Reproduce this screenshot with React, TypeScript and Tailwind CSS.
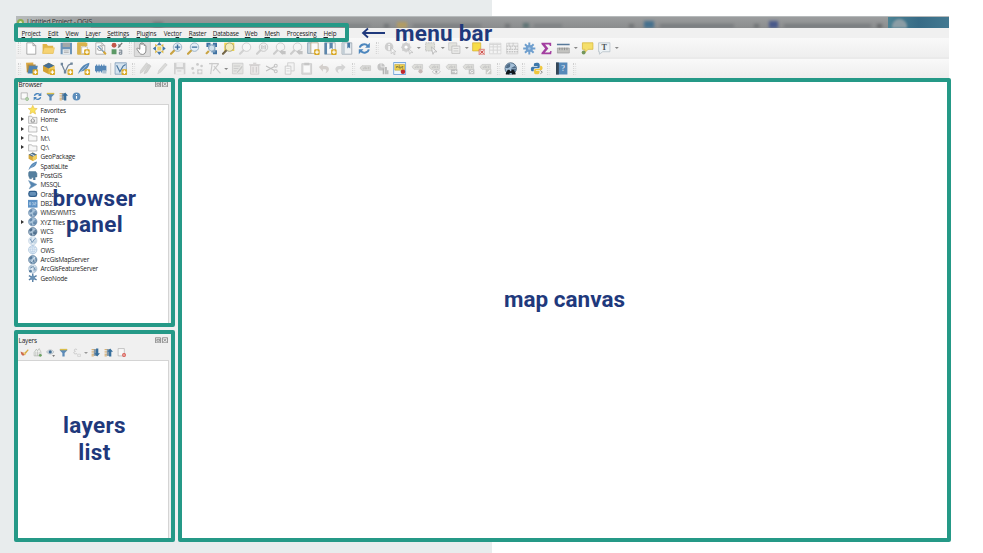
import React from "react";

type IconName = string;

const globe = (fill: string, line: string) => (
  <>
    <circle cx="8" cy="8" r="7" fill={fill} stroke={line} strokeWidth="1" />
    <path d="M3 4l3-2 2 1-1 3-3 2-2-1zM9 7l4-2 2 3-2 4-3 1-2-3zM4 10l3 1v3l-3-1z" fill={line} opacity=".75" />
    <path d="M1.5 8h13M8 1.5v13" fill="none" stroke={fill} strokeWidth="0.7" />
  </>
);
const plus = (
  <>
    <rect x="9" y="9" width="7" height="7" rx="1.5" fill="#d9a928" />
    <path d="M12.5 10.3v4.4M10.3 12.5h4.4" stroke="#fff" strokeWidth="1.4" />
  </>
);
const magnifier = (lens: string, rim: string, handle: string) => (
  <>
    <path d="M5.8 10.2L1.5 14.6" stroke={handle} strokeWidth="2.6" strokeLinecap="round" />
    <circle cx="9.5" cy="6.3" r="5.2" fill={lens} stroke={rim} strokeWidth="1" />
  </>
);
const tag = (fill: string, line: string) => (
  <>
    <path d="M1 6l2.5-3H14v6H3.5z" fill={fill} stroke={line} strokeWidth="0.6" />
    <path d="M4.5 6.8h1.6V5M7.5 4.2v2.6h1.5V5.3M12.5 5.2h-1.6v1.6h1.6" fill="none" stroke={line} strokeWidth="0.8" />
  </>
);
const page = (fill: string, line: string) => <path d="M2.5 1h7.5l3.5 3.5V15h-11zM10 1v3.5h3.5" fill={fill} stroke={line} strokeWidth="1" />;
const rays = (c: string) => (
  <>
    <path d="M8 .5v15M.5 8h15M2.7 2.7l10.6 10.6M13.3 2.7L2.7 13.3" stroke={c} strokeWidth="2.4" />
    <circle cx="8" cy="8" r="4.3" fill={c} />
    <circle cx="8" cy="8" r="1.6" fill="#a9c7e5" />
  </>
);
const folder = <path d="M1 13.5V3h5l1.5 2H15v8.5z" fill="#f7f7f7" stroke="#a0a0a0" strokeWidth="1.1" />;
const funnel = (
  <>
    <path d="M1.5 2h13v2.5L10 9v6H6V9L1.5 4.5z" fill="#5c8bb8" />
    <path d="M1.5 1.5h13v2.5h-13z" fill="#d9bd4a" />
  </>
);
const refresh = (
  <>
    <path d="M2.5 7C3 3.5 9 .8 12.5 5M13.5 9C13 12.5 7 15.2 3.5 11" fill="none" stroke="#4c86bd" strokeWidth="2.4" />
    <path d="M14.8 1v6H9zM1.2 15V9H7z" fill="#4c86bd" />
  </>
);
const arrowList = (up: boolean) => (
  <>
    <path d="M1 3h7M1 7h5M1 11h7M1 14h4" stroke="#d09a47" strokeWidth="1.6" />
    <path d="M5 2h6v12H5z" fill="#8297a8" />
    {up ? <path d="M11 1l5 5.5h-3V15H9V6.5H6z" fill="#366e9c" /> : <path d="M11 15l5-5.5h-3V1H9v8.5H6z" fill="#366e9c" />}
  </>
);

const icons: Record<IconName, React.ReactNode> = {
  page: page("#fff", "#9a9a9a"),
  open: (
    <>
      <path d="M1 14V2.5h5l1.5 2H14V14z" fill="#e0b447" />
      <path d="M1 14l2-7h12.8L14 14z" fill="#f6d374" stroke="#e3b84f" strokeWidth=".6" />
    </>
  ),
  save: (
    <>
      <path d="M1 1h14v14H1z" fill="#6b93b8" />
      <path d="M3.5 1h9v5h-9z" fill="#a3a8a9" />
      <path d="M3.5 9h9v6h-9z" fill="#e7ebed" />
      <path d="M5 11h6M5 13h6" stroke="#999" strokeWidth=".8" />
    </>
  ),
  layout: (
    <>
      <path d="M1 1h10v14H1z" fill="#f3e4b4" stroke="#d2a93c" />
      <path d="M1 1h4v14H1zM5 1h8v4H5z" fill="#d9b34c" />
      <path d="M6 6h7v8H6z" fill="#fff" stroke="#aaa" strokeWidth=".7" />
      {plus}
    </>
  ),
  layoutman: (
    <>
      {page("#fbfbfb", "#a5a5a5")}
      <path d="M5 5l8 8" stroke="#7f9fb9" strokeWidth="1.8" />
      <path d="M4.5 7.5A3 3 0 1 0 7 4.5" fill="none" stroke="#aaa" strokeWidth="1.3" />
      <path d="M12 12l3 3" stroke="#d6a737" strokeWidth="2.4" />
    </>
  ),
  style: (
    <>
      <circle cx="4" cy="4" r="3" fill="#c4584b" />
      <path d="M1 9h6v6H1z" fill="#5c9966" />
      <path d="M9 7l5-6M9.5 3l2 3" stroke="#777" strokeWidth="1.6" />
      <path d="M10 10h3.5v5H10.5v-2.5H13" fill="none" stroke="#6d7c8a" strokeWidth="1.2" />
    </>
  ),
  hand: <path d="M5 9V3c0-1.3 1.7-1.3 1.7 0V1.8c0-1.3 1.8-1.3 1.8 0V3c.2-1.2 1.9-1.1 1.9.2V4.5c.4-1.1 2-.8 2 .4V10c0 3-1.4 5.3-4.2 5.3-3.7 0-4.2-3-6.7-6.3C1 7.5 2.5 7 3.5 8z" fill="#fff" stroke="#666" strokeWidth=".9" />,
  pan: (
    <>
      <path d="M5.500 5.500h5v5h-5z" fill="#f0d468" />
      <path d="M8 0l3 4H5zM8 16l3-4H5zM0 8l4-3v6zM16 8l-4-3v6z" fill="#4779aa" />
      <path d="M3 2l3 2.500-3 1.500zM13 2l-3 2.500 3 1.500zM3 14l3-2.500-3-1.500zM13 14l-3-2.500 3-1.500z" fill="#dfb93f" />
    </>
  ),
  zoomin: (<>{magnifier("#e4eef6", "#8fa9bf", "#c9a342")}<path d="M9.5 3v6.6M6.2 6.3h6.6" stroke="#3e6f9e" strokeWidth="1.8" /></>),
  zoomout: (<>{magnifier("#e4eef6", "#8fa9bf", "#c9a342")}<path d="M6.2 6.3h6.6" stroke="#3e6f9e" strokeWidth="1.8" /></>),
  zoomfull: (<><path d="M2 1h5v5H2zM10 1h5v5h-5zM10 10h5v5h-5z" fill="#3d70a0" /><path d="M4 3h9v10H8V9H4z" fill="#7b9fc0" /><path d="M5 11L1.5 14.6" stroke="#c9a342" strokeWidth="2.6" /><circle cx="8.5" cy="7.5" r="3.700" fill="#d3e1eb" stroke="#8ba8c0" /></>),
  zoomsel: (<><path d="M3 1h12.5v10H3z" fill="#f1d54c" />{magnifier("#f3ecbc", "#9d9a7c", "#75674a")}</>),
  zoomgray: magnifier("#f7f7f7", "#c6c6c6", "#d2d2d2"),
  zoom11: (<>{magnifier("#f0f0f0", "#c0c0c0", "#cfcfcf")}<path d="M7.5 4v5M11.5 4v5M9.5 5v.8M9.5 7v.8" stroke="#aaa" strokeWidth="1" /></>),
  zoomlast: (<>{magnifier("#f4f4f4", "#c4c4c4", "#ccc")}<path d="M8 12l4-3v2h4v4h-4v1z" fill="#c3c3c3" /></>),
  bookmarknew: (<><path d="M1 1h5v13H1z" fill="#c8d5df" stroke="#8ba0b2" /><path d="M5 1h9v13H5z" fill="#fafafa" stroke="#b4a78a" />{plus}</>),
  bookmarks: (<><path d="M1 1h13v14H1z" fill="#fafafa" stroke="#9aa7b1" /><path d="M1 1h3v14H1zM7 1h4v8L9 7.5 7 9z" fill="#5d87ad" />{plus}</>),
  bookmark: (<><path d="M1.5 1h12v14h-12z" fill="#eef1f3" stroke="#98a4ae" /><path d="M2 1h3v14H2z" fill="#c3ced6" /><path d="M8 1h3.5v7L9.8 6.5 8 8z" fill="#4878a5" /></>),
  refresh,
  identify: (<><circle cx="6.5" cy="6" r="5.3" fill="#cfcfcf" /><path d="M6.5 5v5M6.5 2.6v1" stroke="#fff" strokeWidth="1.7" /><path d="M9 7l6 5-3 .2L14 15l-1.5.7-1.5-3L9 14.5z" fill="#f6f6f6" stroke="#bcbcbc" strokeWidth=".8" /></>),
  action: (<><circle cx="6.5" cy="6.5" r="4" fill="none" stroke="#cfcfcf" strokeWidth="3" /><path d="M6.5 0v13M0 6.5h13M2 2l9 9M11 2l-9 9" stroke="#cfcfcf" strokeWidth="1.3" /><circle cx="6.5" cy="6.5" r="1.8" fill="#fff" /><path d="M9 8l6 5h-3l-1 2z" fill="#eee" stroke="#bbb" strokeWidth=".8" /></>),
  select: (<><path d="M1 1h11v10H1z" fill="#dedfd8" stroke="#bbb" strokeDasharray="2 1" /><path d="M8 6l7 6-3.5.2-1.5 3z" fill="#f4f4f4" stroke="#b5b5b5" /></>),
  selform: (<><path d="M1 1h10v9H1z" fill="#e3e3de" stroke="#c9c9c9" /><path d="M5 5h10v9H5z" fill="#ededeb" stroke="#bbb" /><path d="M7 8h6M7 11h6" stroke="#c6c6c6" /></>),
  deselect: (<><path d="M1 1h10v10H1z" fill="#f7dc48" stroke="#cfaa2f" strokeWidth=".8" /><path d="M9 9h7v7H9z" fill="#f4d9d7" stroke="#cd544e" strokeWidth=".8" /><path d="M10.5 10.5l4 4M14.5 10.5l-4 4" stroke="#c63d38" strokeWidth="1.2" /></>),
  table: (<><path d="M1 1.5h14v13H1z" fill="#f4f4f4" stroke="#d4d4d4" /><path d="M1 3h14M1 6h14M1 10h14M5.5 2v12M10.5 2v12" stroke="#d6d6d6" strokeWidth="1.2" /></>),
  calc: (<><path d="M1 1.5h14v13H1z" fill="#f0f0f0" stroke="#cfcfcf" /><path d="M1 5h14M1 9h14M1 12h14" stroke="#c4c4c4" strokeDasharray="2 1" strokeWidth="1.6" /><path d="M4 1v4M9 1v4M6 5v4M12 5v4" stroke="#c4c4c4" strokeWidth="1" /></>),
  gear: rays("#6f9fce"),
  sigma: <path d="M2 1h12v4h-1.5L11.5 3H6.5l4 5-4.2 5h5.7l1-2H14.5L14 15H2v-1.5L6.5 8 2 2.5z" fill="#a33fa0" />,
  measure: (<><path d="M0 3h16" stroke="#58799a" strokeWidth="1.8" /><path d="M.5 7.5h15v6H.5z" fill="#c3c3c0" stroke="#a3a3a3" /><path d="M3.5 7v3M6.5 7v3M9.5 7v3M12.5 7v3" stroke="#888" strokeWidth="1" /></>),
  tip: (<><path d="M2 1h13v8H9L5 13V9H2z" fill="#f5df6b" stroke="#d8b941" /><circle cx="3.5" cy="13" r="2.4" fill="#73965c" /></>),
  text: (<path d="M1 1h14v11H6L2 15v-3H1z" fill="#edf2f5" stroke="#b6c0c7" />),
  layers: (<><path d="M1 1l9-.5v10l-8 2z" fill="#dba842" /><path d="M3 3h10l-1 9-10 1z" fill="#ad8a46" /><path d="M5 4.5h10.5l-2 9.5H3z" fill="#4f83b1" />{plus}</>),
  geopkg: (<><path d="M8 1l7 3.5v7L8 15 1 11.5v-7z" fill="#d6a73a" /><path d="M8 1l7 3.5L8 8 1 4.5z" fill="#4d7292" /><path d="M8 8v7l7-3.5v-7z" fill="#efcf62" /><path d="M4 3l7 3.5" stroke="#dfe9ef" strokeWidth="1.6" /></>),
  geopkgnew: (<><path d="M8 1l7 3.5v7L8 15 1 11.5v-7z" fill="#d3a134" /><path d="M8 1l7 3.5L8 8 1 4.5z" fill="#456f95" /><path d="M8 8v7l7-3.5v-7z" fill="#efc957" />{plus}</>),
  vector: (<><path d="M2 3l4 9L10 4l4-2" fill="none" stroke="#728599" strokeWidth="1.5" /><path d="M.5 1h3v3h-3zM4.5 11h3v3h-3zM12.5.5h3v3h-3z" fill="#70879c" />{plus}</>),
  feathernew: (<><path d="M1 15C3 8 7 3 15 1c0 6-5 10-11 11z" fill="#5588b7" /><path d="M1 15L12 4" stroke="#d2e0eb" strokeWidth=".8" />{plus}</>),
  memory: (<><path d="M1 4.5h14v7H1z" fill="#5486b6" /><path d="M3 3v10M6 3v10M9 3v10M12 3v10" stroke="#5486b6" strokeWidth="1.3" /><path d="M10 10h5v4h-5z" fill="#acc1d1" /></>),
  virtual: (<><path d="M1 1h14v14H1z" fill="#d5e3ef" stroke="#7b9ab5" /><path d="M3 4l4 8 4-7 3-2" fill="none" stroke="#4a779f" strokeWidth="1.5" />{plus}</>),
  pencils: (<><path d="M1 14l1-4 7-9 2.5 2-7 9z" fill="#d7d7d5" stroke="#c2c2c2" strokeWidth=".6" /><path d="M6 14.5l1-3.5 5-8 2.5 2-5 8z" fill="#d2d2d0" stroke="#bcbcbc" strokeWidth=".6" /></>),
  pencil: <path d="M2 14.5l1.5-4.5L11 1.5l2.5 2L6 12z" fill="#dadad8" stroke="#c9c9c9" strokeWidth=".8" />,
  savegray: (<><path d="M1 1h14v14H1z" fill="#d0d0d0" /><path d="M4 1h8v5H4zM3 9h10v6H3z" fill="#eee" /><path d="M5 11h5" stroke="#c5c5c5" /></>),
  points: (<><circle cx="3" cy="8" r="1.7" fill="#cbcbcb" /><circle cx="9" cy="3" r="1.7" fill="#cbcbcb" /><circle cx="4" cy="13.5" r="1.5" fill="#d2d2d2" /><circle cx="14" cy="5" r="1.6" fill="#cbcbcb" /><path d="M8.5 9h6.5v6H8.5z" fill="#d0d0d0" /><path d="M10 12h4M12 10v4" stroke="#fff" /></>),
  vertex: <path d="M1 2h12M5 1L3 15M13 2L6 11M7 5l8 9" stroke="#cbcbcb" strokeWidth="1.4" fill="none" />,
  modify: (<><path d="M1.5 1.5h13v13h-13z" fill="#e3e3e1" stroke="#cacaca" /><path d="M3 5h8M3 8h6M3 11h4" stroke="#c6c6c6" /><path d="M6 13l7-9 2 2-7 8z" fill="#cacac8" stroke="#f4f4f4" strokeWidth=".6" /></>),
  trash: (<><path d="M3 4h10v11H3z" fill="#ebe8e8" stroke="#cbc7c7" /><path d="M1 3.5h14M6 1.5h4M6 6v7M10 6v7" stroke="#cbc7c7" strokeWidth="1.2" /></>),
  cut: (<><circle cx="13" cy="4.5" r="1.8" fill="none" stroke="#c4c4c4" strokeWidth="1.3" /><circle cx="13" cy="11.5" r="1.8" fill="none" stroke="#c4c4c4" strokeWidth="1.3" /><path d="M11.5 5.5L1 11M11.5 10.5L1 5" stroke="#c0c0c0" strokeWidth="1.4" /></>),
  copy: (<><path d="M5.5 1h8v10h-8z" fill="#f3f3f3" stroke="#cbcbcb" /><path d="M2.5 5h7v10h-7z" fill="#f5f5f5" stroke="#c5c5c5" /><path d="M4 8h4M4 11h4" stroke="#d4d4d4" /></>),
  paste: (<><path d="M2 2h12v13H2z" fill="#d8d8d8" stroke="#cacaca" /><path d="M4 4h8v9H4z" fill="#f9f9f9" /><path d="M5 1h6v3H5z" fill="#c6c6c6" /></>),
  undo: <path d="M2 6l5-4v3h3c6 0 6 7 0 9 2-3 2-5-1-5H7v3z" fill="#d3cfcc" />,
  redo: <path d="M14 6L9 2v3H6c-6 0-6 7 0 9-2-3-2-5 1-5h2v3z" fill="#d3d3d3" />,
  tag: <g transform="translate(0 1.5)">{tag("#d9d9d7", "#b9b9b7")}</g>,
  diagram: (<><circle cx="6" cy="6" r="4.5" fill="#c4c4c4" /><path d="M6 1v5h5" stroke="#eee" fill="none" /><path d="M8 8h2v7H8zM11 6h2v9h-2zM13.5 10H15v5h-1.5z" fill="#b3b3b3" /></>),
  labelon: (<><path d="M.5.5h15v15H.5z" fill="#edf4fb" stroke="#6b9fdc" strokeWidth="1.2" /><path d="M2 3h12v7H2z" fill="#f4d64c" stroke="#b69a36" strokeWidth=".7" /><path d="M4 7.5V5.5h2v2M7.5 4v3.5h2V5.5M12.5 5.5h-1.7v2h1.7" fill="none" stroke="#605c42" strokeWidth=".8" /><circle cx="12" cy="12" r="2.8" fill="#c1272d" /></>),
  labelpin: (<>{tag("#dededa", "#bbb")}<circle cx="11.5" cy="11.5" r="2.6" fill="#c6b8b6" /></>),
  labeleye: (<>{tag("#dededa", "#bbb")}<path d="M5 12c3-3.5 7-3.5 10 0-3 3.5-7 3.5-10 0z" fill="#f4f4f4" stroke="#bdbdbd" /><circle cx="10" cy="12" r="1.4" fill="#aaa" /></>),
  labelmove: (<>{tag("#dededa", "#bbb")}<path d="M7 9h8v6H7z" fill="#bcbcbc" /><path d="M8.5 12h5M12 10.5l2 1.5-2 1.5" stroke="#fff" fill="none" /></>),
  labelrot: (<>{tag("#dededa", "#bbb")}<path d="M8 9h7v6H8z" fill="#c2c2c2" /><path d="M13 10.5c-3-1-4 2.5-1 3l1.5-1.5" stroke="#fff" fill="none" /></>),
  labeledit: (<>{tag("#dededa", "#bbb")}<path d="M8 9h7v6H8z" fill="#cbcbc7" /><path d="M9.5 14l4-4" stroke="#f7f7f7" strokeWidth="1.5" /></>),
  metasearch: (<>{globe("#a5c0d8", "#34516d")}<path d="M2 15.5v-2l2.5-4h2l1 2h1l1-2h2L14 13.5v2H9.5v-2h-3v2z" fill="#11161b" /></>),
  python: (<><path d="M8 .8c-3 0-3.5 1-3.5 3V5H9v.8H3C1.4 5.8.8 7 .8 8.5S1.4 11.5 3 11.5h1.3V9.8c0-1.3.8-2 2-2H10c1 0 1.7-.7 1.7-1.8V3.5C11.7 1.5 10.5.8 8 .8z" fill="#3d78aa" /><path d="M8 15.2c3 0 3.5-1 3.5-3V11H7v-.8h6c1.6 0 2.2-1.2 2.2-2.7S14.6 4.5 13 4.5h-.8v2c0 1.3-.8 2-2 2H6.5c-1 0-1.7.7-1.7 1.8v2.2c0 2 1 2.7 3.2 2.7z" fill="#efc73e" /><path d="M12.5 10.5l2.5 2-2.5 2" fill="none" stroke="#777" strokeWidth="1" /></>),
  help: (<><path d="M1 .5h14v15H1z" fill="#5689b9" /><path d="M1 .5h3.5v15H1z" fill="#344657" /></>),
  add: (<><path d="M2 1.5h11v11H2z" fill="#fafafa" stroke="#a0a0a0" strokeWidth="1.2" /><path d="M9 9h7v7H9z" fill="#f0f0f0" /><circle cx="12.5" cy="12.5" r="3" fill="#6fa563" /><path d="M12.5 10.8v3.4M10.8 12.5h3.4" stroke="#fff" /></>),
  funnel,
  collapse: arrowList(true),
  expand: arrowList(false),
  info: (<><circle cx="8" cy="8" r="7" fill="#5c8dbb" /><path d="M8 7v5M8 3.5v1.8" stroke="#fff" strokeWidth="2" /></>),
  star: <path d="M8 .5l2.3 5 5.2.5-4 3.7 1.3 5.5L8 12.3l-4.8 2.9 1.3-5.5L.5 6l5.2-.5z" fill="#fae35b" stroke="#e1b843" strokeWidth=".9" />,
  home: (<><path d="M1 14V2h5l1.5 2H15v10z" fill="#f2f2f2" stroke="#929292" /><path d="M4.5 9L8 6l3.5 3M5.5 8.5V12h5V8.5" fill="none" stroke="#777" strokeWidth="1.2" /></>),
  folder,
  feather: (<><path d="M1 15C3 8 7 3 15 1c0 6-5 10-11 11z" fill="#5588b7" /><path d="M1 15L12 4" stroke="#c2d3e1" strokeWidth=".8" /></>),
  postgis: <path d="M2 1h11l2 3v6h-3v5H9v-4H6v2H3L1 8V3z" fill="#557f9f" stroke="#46708f" strokeWidth=".8" />,
  mssql: <path d="M1 1l14 6.5L2 15l3-6z" fill="#5484b0" stroke="#769dbd" />,
  oracle: (<><rect x=".5" y="3" width="15" height="10.5" rx="4" fill="#315f8c" /><rect x="2.5" y="5" width="11" height="6.5" rx="2.5" fill="#6590b8" /></>),
  db2: (<><path d="M0 1.5h16v13H0z" fill="#5c91c5" /><path d="M2.5 6v4h2V6zM7 6h2v4H7M11 6h2.5v2H11v2h2.5" fill="none" stroke="#d3e3f0" strokeWidth=".9" /></>),
  wms: globe("#a9c3da", "#4c7399"),
  wcs: globe("#a9c0d4", "#2f5376"),
  wfs: (<>{globe("#e8f0f7", "#b6cbdd")}<path d="M4 5l3 6 3-5 3-2" fill="none" stroke="#5f86aa" strokeWidth="1.4" /></>),
  ows: (<><circle cx="8" cy="8" r="7" fill="#f1f7fc" stroke="#8eafd0" /><path d="M1 8h14M8 1v14M3 4c3 1.5 7 1.5 10 0M3 12c3-1.5 7-1.5 10 0M8 1c-5 4-5 10 0 14c5-4 5-10 0-14" fill="none" stroke="#a4c0dc" strokeWidth=".8" /></>),
  arcmap: (<>{globe("#9db9d1", "#426789")}<path d="M5 12l6-8 1 8" fill="none" stroke="#e8f1f8" strokeWidth="1.3" /></>),
  arcfeat: (<>{globe("#dde9f2", "#9ab3c9")}<path d="M4 7l5-3 3 6" fill="none" stroke="#587d9f" strokeWidth="1.3" /><circle cx="4" cy="12" r="2.3" fill="#587d9f" /></>),
  geonode: (<><path d="M8 1v14M1.5 4.5l13 7M14.5 4.5l-13 7" stroke="#587fa4" strokeWidth="2.4" /><circle cx="8" cy="8" r="4" fill="#6a92b6" /></>),
  brush: (<><path d="M6 10l8-8 1.5 1.5-7 9z" fill="#d6aa45" /><path d="M1 6c3 2 5 1 8 4-1 5-7 5-8-4z" fill="#cc684e" /><path d="M6 8l4 4" stroke="#f1d47b" strokeWidth="2" /></>),
  group: (<><path d="M2 14V8l4-6 2 3 3-4 3 6v7z" fill="#eef1ed" stroke="#a4aaa2" /><path d="M5 14V7M8 14V6M11 14V7" stroke="#a9a9a9" /><circle cx="13" cy="13" r="2.5" fill="#6ca262" /></>),
  eye: (<><path d="M1 7c3-5 10-5 13 0-3 5-10 5-13 0z" fill="#d9e3ea" stroke="#a4a9ac" /><circle cx="7.5" cy="7" r="2.8" fill="#416c92" /><path d="M11 13h5l-2.5 2.5z" fill="#555" /></>),
  epsilon: (<><path d="M9 3C5 0 2 4 6 6 1 7 3 12 9 10" fill="none" stroke="#c4c4c4" strokeWidth="1.5" /><path d="M10 11h5v4h-5z" fill="none" stroke="#c4c4c4" /></>),
  remove: (<><path d="M2 1h11v13H2z" fill="#f8f8f8" stroke="#a3a3a3" /><circle cx="12.5" cy="12.5" r="3.5" fill="#d95951" /><path d="M10.5 12.5h4" stroke="#fff" strokeWidth="1.3" /></>),
};

function Icon({ name, className = "size-[13px]" }: { name: IconName; className?: string }) {
  return (
    <svg viewBox="0 0 16 16" className={`shrink-0 ${className}`}>
      {icons[name]}
      {name === "text" && <text x="8" y="10" textAnchor="middle" fontSize="10" fontWeight="bold" fontFamily="Liberation Serif, serif" fill="#4d5358">T</text>}
      {name === "help" && <text x="9.7" y="11.5" textAnchor="middle" fontSize="10" fontFamily="Liberation Serif, serif" fill="#fff">?</text>}
    </svg>
  );
}

function Handle() {
  return (
    <div className="flex w-[8.3px] shrink-0 justify-center gap-px">
      <span className="h-3 border-l border-dotted border-[#cfcfcf]" />
      <span className="h-3 border-l border-dotted border-[#e0e0e0]" />
    </div>
  );
}

function Caret() {
  return (
    <span className="flex w-[6.6px] shrink-0 justify-center">
      <span className="border-x-2 border-t-[2.5px] border-x-transparent border-t-[#888]" />
    </span>
  );
}

// "|" draws a drag handle, "v" a menu caret and "-" a thin separator.
const mainTools = "| page open save layout layoutman style | hand pan zoomin zoomout zoomfull zoomsel zoomgray zoom11 zoomlast zoomlast bookmarknew bookmarks bookmark refresh | identify action v select v selform v deselect table calc gear sigma measure v tip text v".split(" ");
const editTools = "| layers geopkgnew vector feathernew memory - virtual | pencils pencil savegray points vertex v modify trash cut copy paste undo redo | tag diagram labelon labelpin labeleye labelmove labelrot labeledit | metasearch | python | help |".split(" ");

function Toolbar({ tools, className }: { tools: string[]; className: string }) {
  return (
    <div className={`flex shrink-0 items-center bg-linear-to-b from-[#f9f9f9] to-[#eeeeee] ${className}`}>
      {tools.map((t, i) => {
        if (t === "|") return <Handle key={i} />;
        if (t === "v") return <Caret key={i} />;
        if (t === "-") return <span key={i} className="mx-px h-3 w-px shrink-0 bg-[#d0d0d0]" />;
        return (
          <span key={i} className={`flex h-[17px] w-[17.1px] shrink-0 items-center justify-center ${t === "hand" ? "rounded-[1px] border border-[#c5c5c5] bg-[#dddddd]" : ""}`}>
            <Icon name={t} />
          </span>
        );
      })}
    </div>
  );
}

const menus: [string, string, string][] = [
  ["", "Project", "w-[26.5px]"],
  ["", "Edit", "w-[17.5px]"],
  ["", "View", "w-[20px]"],
  ["", "Layer", "w-[21.7px]"],
  ["", "Settings", "w-[29.3px]"],
  ["", "Plugins", "w-[27.3px]"],
  ["Vect", "or", "w-[25px]"],
  ["", "Raster", "w-[24px]"],
  ["", "Database", "w-[32px]"],
  ["", "Web", "w-[19.7px]"],
  ["", "Mesh", "w-[22.3px]"],
  ["Pro", "cessing", "w-[36.7px]"],
  ["", "Help", "w-[20px]"],
];

const tree: [string, string, boolean?][] = [
  ["star", "Favorites"],
  ["home", "Home", true],
  ["folder", "C:\\", true],
  ["folder", "M:\\", true],
  ["folder", "Q:\\", true],
  ["geopkg", "GeoPackage"],
  ["feather", "SpatiaLite"],
  ["postgis", "PostGIS"],
  ["mssql", "MSSQL"],
  ["oracle", "Oracle"],
  ["db2", "DB2"],
  ["wms", "WMS/WMTS"],
  ["wms", "XYZ Tiles", true],
  ["wcs", "WCS"],
  ["wfs", "WFS"],
  ["ows", "OWS"],
  ["arcmap", "ArcGisMapServer"],
  ["arcfeat", "ArcGisFeatureServer"],
  ["geonode", "GeoNode"],
];

function PanelTitle({ title }: { title: string }) {
  return (
    <div className="flex h-[10px] shrink-0 items-center justify-between pr-[2.5px]">
      <span className="pl-[.5px] text-[6.4px] leading-[9px] tracking-[-0.15px]">{title}</span>
      <svg viewBox="0 0 14 7" className="h-[6.5px] w-[13px]" fill="none" stroke="#777" strokeWidth=".8">
        <path d="M.5.8h5.5v5.5H.5zM2 2.5h3v2H2zM8 .8h5.5v5.5H8zM9.2 2l3 3M12.2 2l-3 3" />
      </svg>
    </div>
  );
}

function SmallTools({ names }: { names: string[] }) {
  return (
    <div className="flex h-[15px] shrink-0 items-center">
      {names.map((n, i) => (n === "v" ? <span key={i} className="flex w-[6px] justify-center"><span className="border-x-2 border-t-2 border-x-transparent border-t-[#999]" /></span> : (
        <span key={i} className="flex w-[13px] justify-center"><Icon name={n} className="size-[9px]" /></span>
      )))}
    </div>
  );
}

function TitleBar() {
  return (
    <div className="flex h-[12px] shrink-0 overflow-hidden border-t border-[#b6babb] bg-linear-to-b from-[#9b9d9e] to-[#8a8c8d]">
      <div className="flex w-[75px] items-start bg-linear-to-r from-[#b8bcbc] to-[#9b9d9e] pl-[1px]">
        <span className="mt-[2px] size-[7px] shrink-0 rounded-full border-2 border-[#8fae50] bg-[#e3e8c0]" />
        <span className="ml-[3px] whitespace-nowrap text-[6.8px] leading-[10px] tracking-[-0.26px] text-[#333]">Untitled Project - QGIS</span>
      </div>
      <div className="flex flex-1 items-end blur-[1.5px]">
        <span className="ml-[62px] h-[6px] w-[10px] bg-[#737679]" />
        <span className="ml-[177px] h-[4px] w-[30px] bg-[#818486]" />
        <span className="ml-[14px] h-[4px] w-[5px] bg-[#707375]" />
        <span className="ml-[8px] h-[6px] w-[10px] bg-[#b29c64]" />
        <span className="ml-[6px] h-[4px] w-[68px] bg-[#7d8082]" />
        <span className="ml-[24px] h-[4px] w-[5px] bg-[#707375]" />
        <span className="ml-[13px] h-[5px] w-[6px] bg-[#5d7374]" />
        <span className="ml-[5px] h-[4px] w-[28px] bg-[#7f8284]" />
        <span className="ml-[67px] h-[4px] w-[5px] bg-[#707375]" />
        <span className="ml-[10px] h-[7px] w-[10px] bg-[#46718e]" />
        <span className="ml-[6px] h-[4px] w-[74px] bg-[#7a7d80]" />
        <span className="ml-[20px] h-[4px] w-[5px] bg-[#707375]" />
        <span className="ml-[10px] h-[7px] w-[9px] bg-[#49598b]" />
        <span className="ml-[6px] h-[4px] w-[87px] bg-[#7a7d80]" />
        <span className="ml-[6px] h-[4px] w-[5px] bg-[#66696b]" />
      </div>
      <div className="flex w-[61px] items-end bg-linear-to-r from-[#4d8394] via-[#376b86] to-[#437991] pl-1">
        <span className="h-[9px] w-[15px] rounded-t-full bg-[#8b9da5] blur-[1px]" />
      </div>
    </div>
  );
}

const note = "font-['Roboto','Noto_Sans',sans-serif] text-[22.5px] font-bold text-[#1f397c] whitespace-nowrap";

export default function App() {
  return (
    <div className="relative h-[553px] w-[983px] overflow-hidden bg-white font-['Open_Sans','Noto_Sans',sans-serif] text-[#222]">
      <div className="flex h-full w-[491.5px] bg-[#e8eced] pl-4 pt-4">
        <main className="flex h-[525px] w-[933px] shrink-0 flex-col bg-[#f0f0f0]">
          <TitleBar />
          <nav className="flex h-[10px] shrink-0 items-center bg-[#f0f0f0] pl-[5.5px] text-[6.3px] leading-[9px] tracking-[-0.2px]">
            {menus.map(([lead, rest, width]) => (
              <span key={lead + rest} className={`shrink-0 whitespace-nowrap ${width}`}>
                {lead}<span className="underline decoration-[0.5px] underline-offset-1">{rest[0]}</span>{rest.slice(1)}
              </span>
            ))}
          </nav>
          <Toolbar tools={mainTools} className="h-[21px] border-b-2 border-[#eaeaea] pt-px *:-translate-x-[1.2px]" />
          <Toolbar tools={editTools} className="h-[19px] *:-translate-x-[0.8px]" />
          <div className="flex min-h-0 flex-1">
            <aside className="flex w-[158px] shrink-0 flex-col pl-[2px] pr-1">
              <section className="flex h-[248px] shrink-0 flex-col pt-px">
                <PanelTitle title="Browser" />
                <SmallTools names={["add", "refresh", "funnel", "collapse", "info"]} />
                <ul className="mr-[1.5px] flex-1 border border-l-0 border-[#d4d4d4] bg-white pt-[.5px]">
                  {tree.map(([icon, label, open], i) => (
                    <li key={i} className="flex h-[9.34px] items-center text-[6.4px] leading-[9px] tracking-[-0.18px]">
                      <span className="flex w-[10px] pl-[3px]">
                        {open && <span className="border-y-2 border-l-[3px] border-y-transparent border-l-[#333]" />}
                      </span>
                      <Icon name={icon} className="size-[9.5px]" />
                      <span className="ml-[3px] whitespace-nowrap">{label}</span>
                    </li>
                  ))}
                </ul>
              </section>
              <section className="flex flex-1 flex-col pt-[9px]">
                <PanelTitle title="Layers" />
                <SmallTools names={["brush", "group", "eye", "funnel", "epsilon", "v", "expand", "collapse", "remove"]} />
                <div className="mr-[1.5px] flex-1 border border-l-0 border-[#d4d4d4] bg-white" />
              </section>
            </aside>
            <section className="ml-1 flex-1 bg-white" />
          </div>
        </main>
      </div>

      <div className="absolute left-[14.4px] top-[22.5px] h-[19.2px] w-[334.6px] rounded-[2px] border-4 border-[#259987]" />
      <div className="absolute left-[14.4px] top-[78.2px] h-[248.8px] w-[160.4px] rounded-[2px] border-4 border-[#259987]" />
      <div className="absolute left-[14.4px] top-[330.2px] h-[212px] w-[160.4px] rounded-[2px] border-4 border-[#259987]" />
      <div className="absolute left-[178px] top-[78.2px] h-[464px] w-[773px] rounded-[2px] border-4 border-[#259987]" />

      <div className={`absolute left-[361px] top-[20px] flex items-center leading-[26px] tracking-[0.25px] ${note}`}>
        <svg viewBox="0 0 25 12" className="h-3 w-[25px]" fill="none" stroke="#1f397c" strokeWidth="1.8">
          <path d="M24 6H2M7 1.5L2 6l5 4.5" />
        </svg>
        <span className="ml-[9px]">menu bar</span>
      </div>
      <div className={`absolute left-[44px] top-[185px] w-[101px] text-center leading-[26px] tracking-[0.3px] ${note}`}>browser<br />panel</div>
      <div className={`absolute left-[44px] top-[412px] w-[101px] text-center leading-[27px] tracking-[0.3px] ${note}`}>layers<br />list</div>
      <div className={`absolute left-[504px] top-[286px] leading-[26px] ${note}`}>map canvas</div>
    </div>
  );
}
